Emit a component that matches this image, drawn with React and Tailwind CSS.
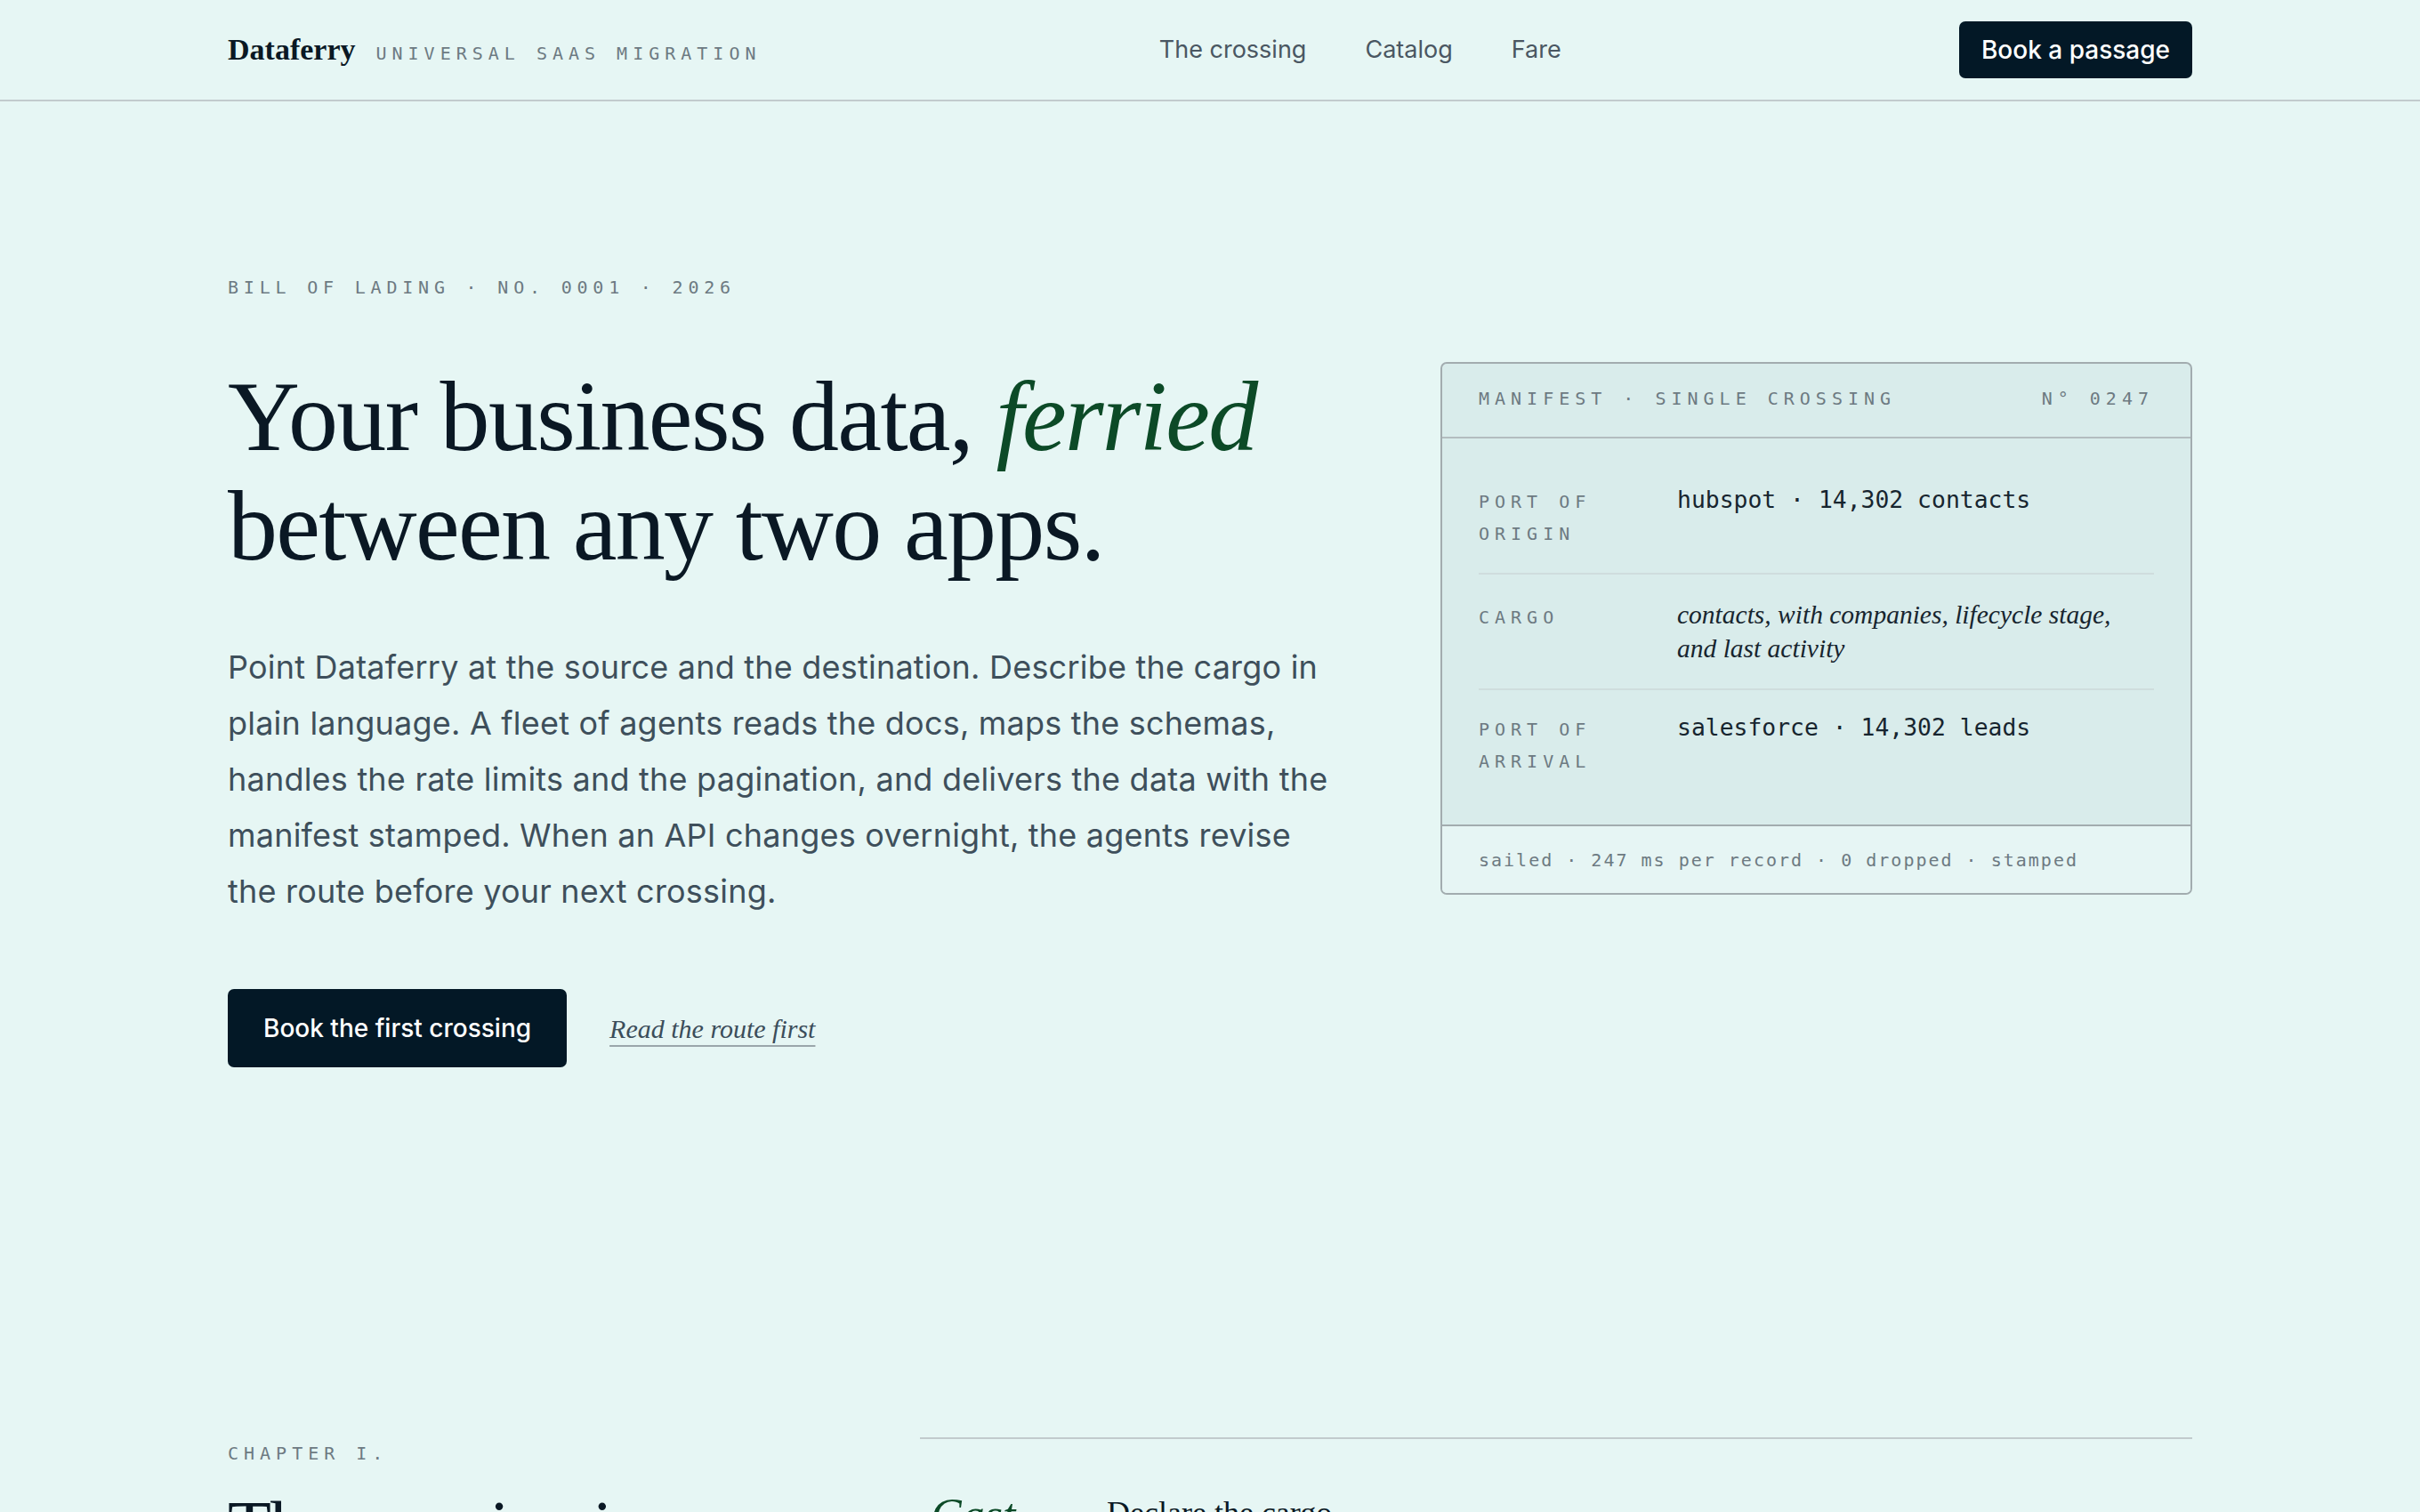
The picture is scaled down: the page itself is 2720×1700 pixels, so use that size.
import React from "react";

const serif = "font-['Liberation_Serif','Times_New_Roman',serif]";
const mono = "font-['DejaVu_Sans_Mono','Liberation_Mono',monospace]";

function Header() {
  return (
    <header className="border-b-2 border-[#c2cbcd]">
      <div className="mx-[256px] flex h-[112px] items-center justify-between">
        <div className="flex items-baseline gap-[23px]">
          <span className={`${serif} text-[34px] font-bold leading-none text-[#0a1824]`}>
            Dataferry
          </span>
          <span className={`${mono} text-[20px] uppercase leading-none tracking-[0.3em] text-[#6d7a82]`}>
            Universal SaaS migration
          </span>
        </div>
        <nav className="flex items-center gap-[66px] font-['Inter',sans-serif] text-[27px] text-[#4a5762]">
          <a href="#crossing">The crossing</a>
          <a href="#catalog">Catalog</a>
          <a href="#fare">Fare</a>
        </nav>
        <a
          href="#book"
          className="flex h-[64px] items-center rounded-[7px] bg-[#031826] px-[25px] font-['Inter',sans-serif] text-[28px] font-medium text-white"
        >
          Book a passage
        </a>
      </div>
    </header>
  );
}

function ManifestRow({ label, children, last }) {
  return (
    <div
      className={`grid grid-cols-[223px_1fr] items-baseline py-[26px] ${
        last ? "" : "border-b-2 border-[#cfdddd]"
      }`}
    >
      <div className={`${mono} text-[20px] uppercase leading-[36px] tracking-[0.3em] text-[#6d7a82]`}>
        {label}
      </div>
      <div>{children}</div>
    </div>
  );
}

function Manifest() {
  return (
    <div className="overflow-hidden rounded-[7px] border-2 border-[#a2acaf] bg-[#d9eceb]">
      <div
        className={`flex h-[84px] items-start justify-between border-b-2 border-[#b3bdbf] px-[41px] pt-[25px] ${mono} text-[20px] uppercase leading-[28px] tracking-[0.3em] text-[#6d7a82]`}
      >
        <span>Manifest · single crossing</span>
        <span>N° 0247</span>
      </div>
      <div className="px-[41px] pb-[27px] pt-[27px]">
        <ManifestRow label={<>Port of<br />origin</>}>
          <span className={`${mono} text-[26.4px] leading-[32px] text-[#17252f]`}>
            hubspot · 14,302 contacts
          </span>
        </ManifestRow>
        <ManifestRow label="Cargo">
          <div className={`${serif} max-w-[505px] text-[29.5px] italic leading-[38px] text-[#17252f]`}>
            contacts, with companies, lifecycle stage, and last activity
          </div>
        </ManifestRow>
        <ManifestRow label={<>Port of<br />arrival</>} last>
          <span className={`${mono} text-[26.4px] leading-[32px] text-[#17252f]`}>
            salesforce · 14,302 leads
          </span>
        </ManifestRow>
      </div>
      <div
        className={`border-t-2 border-[#a2acaf] bg-[#e6f5f4] px-[41px] pb-[23px] pt-[24px] ${mono} text-[20px] leading-[28px] tracking-[0.1em] text-[#6d7a82]`}
      >
        sailed · 247 ms per record · 0 dropped · stamped
      </div>
    </div>
  );
}

function Hero() {
  return (
    <section className="mx-[256px] pt-[195px]">
      <div className={`${mono} text-[20px] uppercase leading-[28px] tracking-[0.29em] text-[#6d7a82]`}>
        Bill of lading · No. 0001 · 2026
      </div>
      <div className="mt-[70px] grid grid-cols-[1250px_845px] items-start gap-[113px]">
        <div>
          <h1 className={`${serif} text-[112px] font-normal leading-[1.1] tracking-[-0.015em] text-[#0a1824]`}>
            Your business data, <em className="italic text-[#0c4a27]">ferried</em>
            <br />
            between any two apps.
          </h1>
          <p className="mt-[66px] max-w-[1245px] font-['Inter',sans-serif] text-[36px] leading-[63px] tracking-[0.006em] text-[#3e4f5b]">
            Point Dataferry at the source and the destination. Describe the cargo in plain language. A
            fleet of agents reads the docs, maps the schemas, handles the rate limits and the
            pagination, and delivers the data with the manifest stamped. When an API changes
            overnight, the agents revise the route before your next crossing.
          </p>
          <div className="mt-[78px] flex items-center gap-[48px]">
            <a
              href="#book"
              className="flex h-[88px] items-center rounded-[7px] bg-[#031826] px-[40px] font-['Inter',sans-serif] text-[28px] font-medium text-white"
            >
              Book the first crossing
            </a>
            <a
              href="#route"
              className={`${serif} text-[30px] italic text-[#3b4d5a] underline decoration-[#9aa6aa] decoration-2 underline-offset-[8px]`}
            >
              Read the route first
            </a>
          </div>
        </div>
        <Manifest />
      </div>
    </section>
  );
}

function Chapter() {
  const steps = [
    ["Cast", "Declare the cargo", "Name the source, the destination, and what should travel between them, in plain words."],
    ["Chart", "Read the waters", "The agents read both APIs' documentation and map every field onto its counterpart."],
    ["Cross", "Sail and stamp", "Records are carried across with rate limits respected, and every one is counted on arrival."],
  ];
  return (
    <section id="crossing" className="mx-[256px] grid grid-cols-[650px_1fr] gap-[128px] pb-[200px] pt-[416px]">
      <div className="pt-[4px]">
        <div className={`${mono} text-[20px] uppercase leading-[28px] tracking-[0.3em] text-[#6d7a82]`}>
          Chapter I.
        </div>
        <h2 className={`${serif} mt-[24px] text-[80px] font-normal leading-[1.1] tracking-[-0.02em] text-[#0a1824]`}>
          The crossing in seven
        </h2>
      </div>
      <div className="border-t-2 border-[#c2cbcd]">
        {steps.map(([mark, title, body], i) => (
          <div
            key={title}
            className={`grid grid-cols-[210px_1fr] items-start pb-[56px] pt-[60px] ${
              i < steps.length - 1 ? "border-b-2 border-[#cfdddd]" : ""
            }`}
          >
            <div className={`${serif} pl-[12px] text-[52px] italic leading-none text-[#0c4a27]`}>{mark}</div>
            <div>
              <h3 className={`${serif} text-[36px] font-normal leading-[1.3] text-[#0a1824]`}>{title}</h3>
              <p className="mt-[16px] font-['Inter',sans-serif] text-[30px] leading-[1.7] text-[#3e4f5b]">
                {body}
              </p>
            </div>
          </div>
        ))}
      </div>
    </section>
  );
}

export default function App() {
  return (
    <div className="min-h-screen bg-[#e6f6f4] text-[#0a1824]">
      <Header />
      <main>
        <Hero />
        <Chapter />
      </main>
    </div>
  );
}
